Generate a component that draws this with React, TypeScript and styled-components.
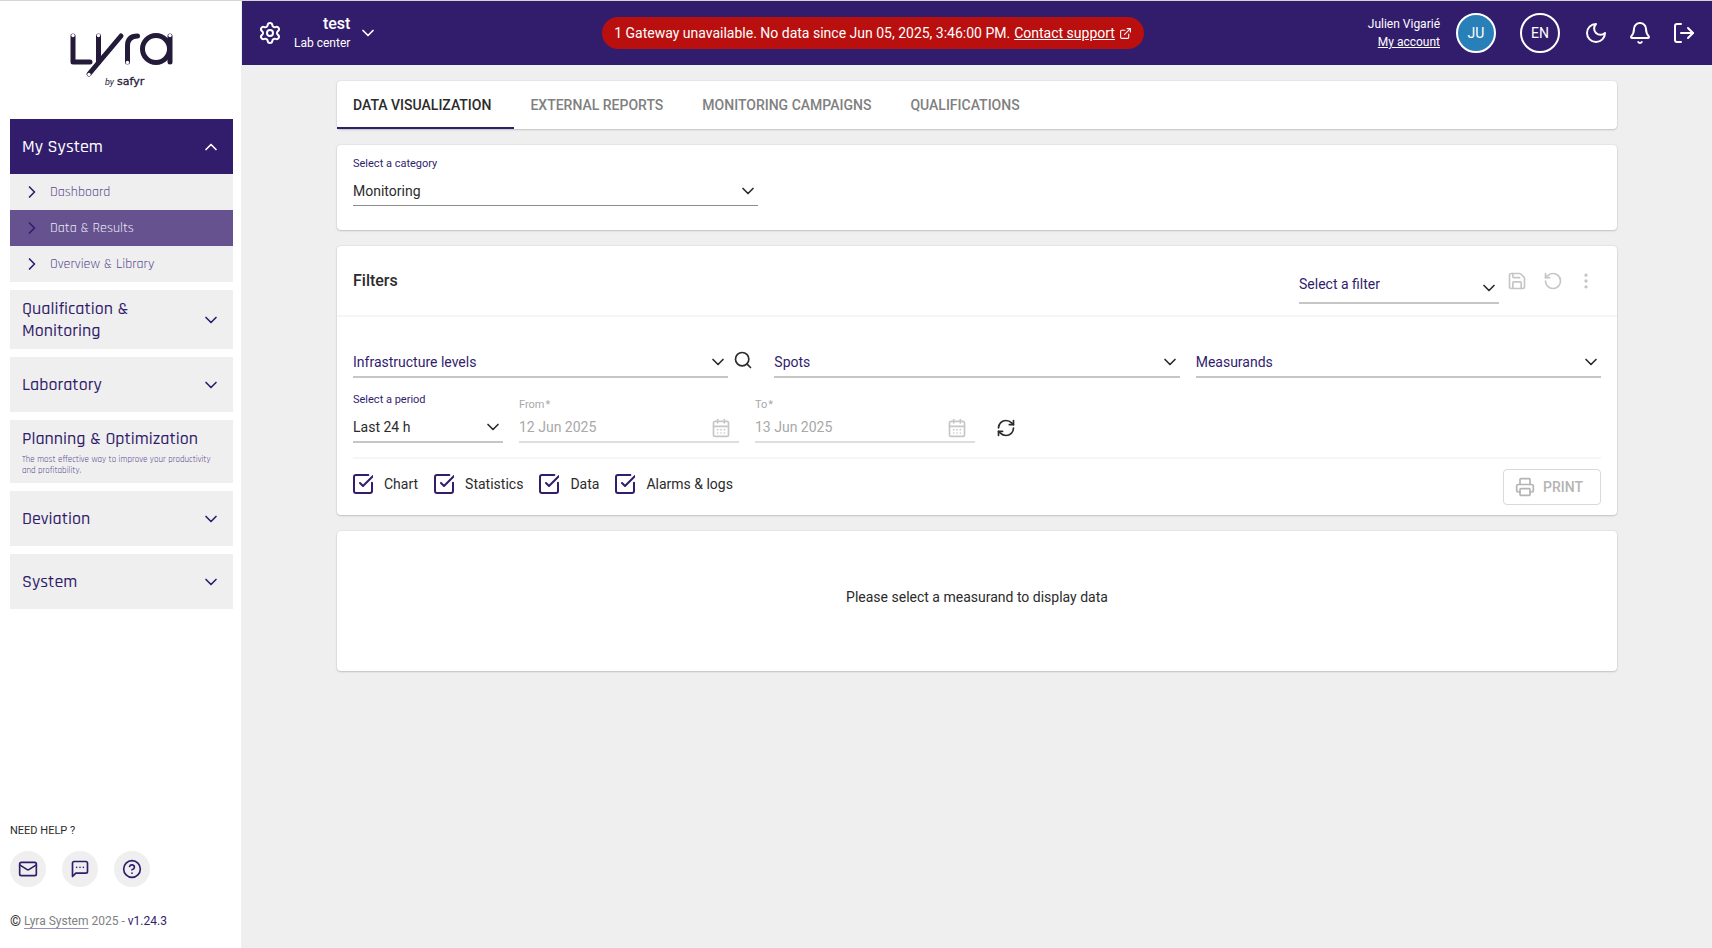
import React, { useState } from "react";
import styled, { createGlobalStyle } from "styled-components";
import {
  Bell,
  CalendarDays,
  ChevronDown,
  ChevronRight,
  ChevronUp,
  CircleQuestionMark,
  EllipsisVertical,
  ExternalLink,
  LogOut,
  Mail,
  Printer,
  RefreshCw,
  RotateCcw,
  Save,
  Search,
  Settings,
  SquareCheckBig,
} from "lucide-react";

const c = {
  primary: "#321d6d",
  active: "#65528f",
  soft: "#5a4990",
  page: "#efefef",
  text: "#2b2b2b",
  muted: "#808080",
  disabled: "#a8a8a8",
  icon: "#c6c6c6",
  line: "#c6c6c6",
  divider: "#f6f6f6",
  danger: "#b90f0f",
};

const GlobalStyle = createGlobalStyle`
  *, *::before, *::after { box-sizing: border-box; }
  body { margin: 0; background: ${c.page}; color: ${c.text}; font: 14px/20px Roboto, sans-serif; }
  button, input, select { font: inherit; color: inherit; }
  button { background: none; border: 0; padding: 0; cursor: pointer; }
  svg { display: block; flex: none; }
  a { color: inherit; }
`;

const Shell = styled.div`
  display: flex;
  min-height: 100vh;
  border-top: 1px solid #d6d6d6;
`;

/* Sidebar */

const Sidebar = styled.aside`
  flex: 0 0 242px;
  display: flex;
  flex-direction: column;
  padding: 0 8px 19px 10px;
  background: #fff;
  border-right: 1px solid ${c.page};
`;

const Brand = styled.a`
  display: flex;
  justify-content: center;
  padding: 28px 0 26px;
  color: #241a3a;
`;

const Menu = styled.nav`
  display: flex;
  flex-direction: column;
  gap: 8px;
  font-family: Rajdhani, Roboto, sans-serif;
`;

const MenuButton = styled.button<{ $open?: boolean }>`
  display: flex;
  align-items: center;
  justify-content: space-between;
  width: 100%;
  min-height: 55px;
  padding: 8px 12px 7px;
  text-align: left;
  font-size: 18px;
  font-weight: 500;
  line-height: 22px;
  background: ${(p) => (p.$open ? c.primary : c.page)};
  color: ${(p) => (p.$open ? "#fff" : c.primary)};
`;

const MenuHint = styled.small`
  display: block;
  max-width: 190px;
  margin-top: 4px;
  font-size: 9px;
  font-weight: 400;
  line-height: 11px;
  color: ${c.soft};
`;

const SubItem = styled.a<{ $active?: boolean }>`
  display: flex;
  align-items: center;
  gap: 8px;
  height: 36px;
  padding: 0 12px;
  font-size: 14px;
  text-decoration: none;
  background: ${(p) => (p.$active ? c.active : c.page)};
  color: ${(p) => (p.$active ? "#eeeaf5" : c.soft)};
  svg { color: ${c.primary}; }
`;

const Help = styled.div`
  margin-top: auto;
  font-size: 11px;
  line-height: 16px;
`;

const HelpIcons = styled.div`
  display: flex;
  gap: 16px;
  margin: 12px 0 26px;
`;

const HelpButton = styled.button`
  display: grid;
  place-items: center;
  width: 36px;
  height: 36px;
  border-radius: 50%;
  background: ${c.page};
  color: ${c.primary};
`;

const Copyright = styled.div`
  display: flex;
  gap: 3px;
  font-size: 12px;
  color: ${c.muted};
  b { font-size: 14px; font-weight: 400; color: ${c.text}; }
  a { text-underline-offset: 3px; text-decoration-color: #9a8fc0; }
  span { color: ${c.primary}; }
`;

/* Header */

const Main = styled.div`
  flex: 1;
  min-width: 0;
`;

const Header = styled.header`
  display: flex;
  align-items: center;
  height: 64px;
  padding: 0 16px;
  background: ${c.primary};
  color: #fff;
`;

const Center = styled.button`
  display: flex;
  align-items: center;
  gap: 8px;
  margin-left: 12px;
  text-align: right;
  font-size: 12px;
  line-height: 18px;
  strong { display: block; font-size: 16px; font-weight: 500; line-height: 20px; }
`;

const AlertSlot = styled.div`
  flex: 1;
  display: flex;
  justify-content: center;
`;

const Alert = styled.div`
  display: flex;
  align-items: center;
  gap: 4px;
  height: 32px;
  padding: 0 12px;
  border-radius: 16px;
  background: ${c.danger};
  white-space: nowrap;
  a { display: flex; align-items: center; gap: 4px; }
`;

const User = styled.div`
  margin-right: 16px;
  text-align: right;
  font-size: 12px;
  line-height: 18px;
  a { display: block; }
`;

const Round = styled.button<{ $fill?: string }>`
  width: 40px;
  height: 40px;
  margin-right: 24px;
  border: 2px solid #fff;
  border-radius: 50%;
  background: ${(p) => p.$fill ?? "transparent"};
`;

const HeaderIcons = styled.div`
  display: flex;
  gap: 20px;
`;

/* Content */

const Content = styled.main`
  display: flex;
  flex-direction: column;
  gap: 16px;
  max-width: 1312px;
  margin: 0 auto;
  padding: 16px;
`;

const Card = styled.section`
  background: #fff;
  border-radius: 4px;
  box-shadow: 0 1px 2px rgba(0, 0, 0, 0.16), 0 0 2px rgba(0, 0, 0, 0.12);
`;

const Tabs = styled(Card)`
  display: flex;
  height: 48px;
`;

const Tab = styled.button<{ $active?: boolean }>`
  padding: 2px 23px 0 16px;
  font-weight: 500;
  border-bottom: 2px solid ${(p) => (p.$active ? c.primary : "transparent")};
  color: ${(p) => (p.$active ? c.text : c.muted)};
`;

const Columns = styled.div`
  display: grid;
  grid-template-columns: repeat(3, minmax(0, 1fr));
  align-items: end;
  gap: 16px;
`;

const CategoryCard = styled(Card)`
  padding: 11px 16px 24px;
`;

const FieldBox = styled.div<{ $width?: string; $thin?: boolean; $pale?: boolean }>`
  position: relative;
  display: flex;
  flex-direction: column;
  flex: ${(p) => (p.$width ? `0 0 ${p.$width}` : "1")};
  min-width: 0;
  border-bottom: ${(p) => (p.$thin ? "1px" : "2px")} solid
    ${(p) => (p.$pale ? "#dedede" : p.$thin ? "#8c8c8c" : c.line)};
`;

const FieldLabel = styled.label<{ $muted?: boolean }>`
  display: flex;
  gap: 1px;
  margin-bottom: ${(p) => (p.$muted ? 0 : 5)}px;
  font-size: 11px;
  line-height: 16px;
  color: ${(p) => (p.$muted ? c.disabled : c.primary)};
`;

const SelectInput = styled.select<{ $placeholder?: boolean; $tall?: boolean }>`
  appearance: none;
  width: 100%;
  height: ${(p) => (p.$tall ? 36 : 28)}px;
  padding: 0 24px 0 0;
  border: 0;
  background: none;
  color: ${(p) => (p.$placeholder ? c.primary : c.text)};
`;

const DateInput = styled.input`
  width: 100%;
  height: 28px;
  padding: 0 36px 0 0;
  border: 0;
  background: none;
  &:disabled { color: ${c.disabled}; }
`;

const Adornment = styled.span<{ $right?: number; $bottom?: number }>`
  position: absolute;
  right: ${(p) => p.$right ?? 0}px;
  bottom: ${(p) => p.$bottom ?? 4}px;
  pointer-events: none;
`;

const FilterHeader = styled.div`
  display: flex;
  align-items: center;
  height: 71px;
  padding: 0 16px;
  border-bottom: 2px solid ${c.divider};
  h2 { flex: 1; margin: 0; font-size: 16px; font-weight: 500; line-height: 20px; }
`;

const FilterSelect = styled.div`
  display: flex;
  width: 200px;
  padding-top: 9px;
`;

const IconButton = styled.button<{ $wide?: boolean; $dim?: boolean; $short?: boolean }>`
  display: grid;
  place-items: center;
  width: ${(p) => (p.$wide ? 36 : 30)}px;
  height: ${(p) => (p.$short ? 30 : 36)}px;
  color: ${(p) => (p.$dim ? c.icon : c.text)};
`;

const FilterBody = styled.div`
  padding: 25px 16px 10px;
`;

const WithButton = styled.div`
  display: flex;
  align-items: flex-end;
`;

const PeriodRow = styled.div`
  display: flex;
  align-items: flex-end;
  gap: 16px;
  margin-top: 14px;
  padding-bottom: 14px;
  border-bottom: 2px solid ${c.divider};
`;

const OptionsRow = styled.div`
  display: flex;
  align-items: center;
  gap: 16px;
  padding-top: 10px;
`;

const Check = styled.label`
  position: relative;
  display: flex;
  align-items: center;
  gap: 11px;
  margin-bottom: 6px;
  cursor: pointer;
  svg { color: ${c.primary}; }
  input { position: absolute; left: 0; width: 20px; height: 20px; margin: 0; opacity: 0; }
`;

const PrintButton = styled.button`
  display: flex;
  align-items: center;
  gap: 8px;
  height: 36px;
  margin-left: auto;
  padding: 0 17px 0 11px;
  border: 1px solid #d9d9d9;
  border-radius: 4px;
  font-weight: 500;
  color: #b4b4b4;
`;

const Empty = styled(Card)`
  padding: 56px 16px 64px;
  text-align: center;
`;

function Logo() {
  return (
    <svg width="106" height="64" viewBox="69 29 106 64" role="img" aria-label="Lyra by safyr">
      <g fill="none" stroke="currentColor" strokeWidth="5" strokeLinecap="round" strokeLinejoin="round">
        <path d="M73 36v26h17" />
        <path d="M98.500 36v26" />
        <path d="M121 36 89 74" />
        <path d="M127.500 62V46q0-10 10-10" />
        <circle cx="156" cy="49" r="13.500" />
        <path d="M170 36v26" />
      </g>
      <g fill="#fff">
        <circle cx="73" cy="35.500" r="1.700" />
        <circle cx="98.500" cy="35.500" r="1.700" />
        <circle cx="89" cy="74.500" r="1.700" />
        <circle cx="127.500" cy="62.500" r="1.700" />
        <circle cx="170" cy="35.500" r="1.700" />
      </g>
      <text x="105" y="85" fontSize="9" fontStyle="italic" fill="currentColor" fontFamily="Roboto, sans-serif">by</text>
      <text x="117" y="85" fontSize="11" fill="currentColor" stroke="currentColor" strokeWidth="0.3" fontFamily="'DejaVu Sans', sans-serif">safyr</text>
    </svg>
  );
}

const ChatIcon = () => (
  <svg width="20" height="20" viewBox="0 0 24 24" fill="none" stroke="currentColor" strokeWidth="2" strokeLinecap="round" strokeLinejoin="round">
    <path d="M21 15a2 2 0 0 1-2 2H7l-4 4V5a2 2 0 0 1 2-2h14a2 2 0 0 1 2 2z" />
    <path d="M8 10h.01M12 10h.01M16 10h.01" />
  </svg>
);

const MoonIcon = () => (
  <svg width="24" height="24" viewBox="0 0 24 24" fill="none" stroke="currentColor" strokeWidth="2" strokeLinecap="round" strokeLinejoin="round">
    <path d="M12 3a6 6 0 0 0 9 9 9 9 0 1 1-9-9Z" />
  </svg>
);

type FieldProps = { id: string; text: string; label?: string; width?: string; thin?: boolean; tall?: boolean };

function SelectField({ id, text, label, width, thin, tall }: FieldProps) {
  return (
    <FieldBox $width={width} $thin={thin}>
      {label && <FieldLabel htmlFor={id}>{label}</FieldLabel>}
      <SelectInput id={id} $placeholder={!label} $tall={tall} aria-label={label ? undefined : text}>
        <option>{text}</option>
      </SelectInput>
      <Adornment>
        <ChevronDown size={20} />
      </Adornment>
    </FieldBox>
  );
}

function DateField({ id, label, value }: { id: string; label: string; value: string }) {
  return (
    <FieldBox $width="220px" $pale>
      <FieldLabel htmlFor={id} $muted>
        {label}
        <span>*</span>
      </FieldLabel>
      <DateInput id={id} value={value} disabled readOnly />
      <Adornment $right={8} $bottom={3}>
        <CalendarDays size={20} color={c.icon} />
      </Adornment>
    </FieldBox>
  );
}

function CheckField({ label }: { label: string }) {
  const [checked, setChecked] = useState(true);
  return (
    <Check>
      <input type="checkbox" checked={checked} onChange={() => setChecked(!checked)} />
      {checked ? (
        <SquareCheckBig width={20} height={20} viewBox="2 2 20 20" />
      ) : (
        <svg width="20" height="20" viewBox="2 2 20 20" fill="none" stroke="currentColor" strokeWidth="2">
          <rect x="3" y="3" width="18" height="18" rx="2" />
        </svg>
      )}
      {label}
    </Check>
  );
}

const tabs = ["DATA VISUALIZATION", "EXTERNAL REPORTS", "MONITORING CAMPAIGNS", "QUALIFICATIONS"];
const subItems = ["Dashboard", "Data & Results", "Overview & Library"];
const checks = ["Chart", "Statistics", "Data", "Alarms & logs"];

function MenuEntry({ label }: { label: string }) {
  return (
    <MenuButton>
      <span>{label}</span>
      <ChevronDown size={20} />
    </MenuButton>
  );
}

export default function App() {
  return (
    <>
      <GlobalStyle />
      <Shell>
        <Sidebar>
          <Brand href="#">
            <Logo />
          </Brand>
          <Menu>
            <div>
              <MenuButton $open>
                <span>My System</span>
                <ChevronUp size={20} />
              </MenuButton>
              {subItems.map((s) => (
                <SubItem key={s} href="#" $active={s === "Data & Results"}>
                  <ChevronRight size={20} />
                  {s}
                </SubItem>
              ))}
            </div>
            <MenuEntry label="Qualification & Monitoring" />
            <MenuEntry label="Laboratory" />
            <MenuButton>
              <span>
                Planning &amp; Optimization
                <MenuHint>The most effective way to improve your productivity and profitability.</MenuHint>
              </span>
            </MenuButton>
            <MenuEntry label="Deviation" />
            <MenuEntry label="System" />
          </Menu>
          <Help>
            NEED HELP ?
            <HelpIcons>
              <HelpButton aria-label="Mail"><Mail size={20} /></HelpButton>
              <HelpButton aria-label="Chat"><ChatIcon /></HelpButton>
              <HelpButton aria-label="Help"><CircleQuestionMark size={20} /></HelpButton>
            </HelpIcons>
            <Copyright>
              <b>©</b>
              <a href="#">Lyra System</a>
              2025 -
              <span>v1.24.3</span>
            </Copyright>
          </Help>
        </Sidebar>
        <Main>
          <Header>
            <button aria-label="Settings"><Settings size={24} /></button>
            <Center>
              <span>
                <strong>test</strong>
                Lab center
              </span>
              <ChevronDown size={20} />
            </Center>
            <AlertSlot>
              <Alert role="alert">
                1 Gateway unavailable. No data since Jun 05, 2025, 3:46:00 PM.
                <a href="#">Contact support <ExternalLink size={13} /></a>
              </Alert>
            </AlertSlot>
            <User>
              Julien Vigarié
              <a href="#">My account</a>
            </User>
            <Round $fill="#2980b9">JU</Round>
            <Round>EN</Round>
            <HeaderIcons>
              <button aria-label="Dark mode"><MoonIcon /></button>
              <button aria-label="Notifications"><Bell size={24} /></button>
              <button aria-label="Log out"><LogOut size={24} /></button>
            </HeaderIcons>
          </Header>
          <Content>
            <Tabs role="tablist">
              {tabs.map((t, i) => (
                <Tab key={t} role="tab" aria-selected={i === 0} $active={i === 0}>{t}</Tab>
              ))}
            </Tabs>
            <CategoryCard>
              <Columns>
                <SelectField id="category" label="Select a category" text="Monitoring" thin />
              </Columns>
            </CategoryCard>
            <Card>
              <FilterHeader>
                <h2>Filters</h2>
                <FilterSelect>
                  <SelectField id="filter" text="Select a filter" tall />
                </FilterSelect>
                <IconButton $wide $dim aria-label="Save filter"><Save size={20} /></IconButton>
                <IconButton $wide $dim aria-label="Reset filter"><RotateCcw size={20} /></IconButton>
                <IconButton $dim aria-label="More"><EllipsisVertical size={20} /></IconButton>
              </FilterHeader>
              <FilterBody>
                <Columns>
                  <WithButton>
                    <SelectField id="levels" text="Infrastructure levels" />
                    <IconButton aria-label="Search"><Search size={20} /></IconButton>
                  </WithButton>
                  <SelectField id="spots" text="Spots" />
                  <SelectField id="measurands" text="Measurands" />
                </Columns>
                <PeriodRow>
                  <SelectField id="period" label="Select a period" text="Last 24 h" width="150px" />
                  <DateField id="from" label="From" value="12 Jun 2025" />
                  <DateField id="to" label="To" value="13 Jun 2025" />
                  <IconButton $short aria-label="Refresh"><RefreshCw size={20} /></IconButton>
                </PeriodRow>
                <OptionsRow>
                  {checks.map((k) => <CheckField key={k} label={k} />)}
                  <PrintButton>
                    <Printer size={20} />
                    PRINT
                  </PrintButton>
                </OptionsRow>
              </FilterBody>
            </Card>
            <Empty>Please select a measurand to display data</Empty>
          </Content>
        </Main>
      </Shell>
    </>
  );
}
